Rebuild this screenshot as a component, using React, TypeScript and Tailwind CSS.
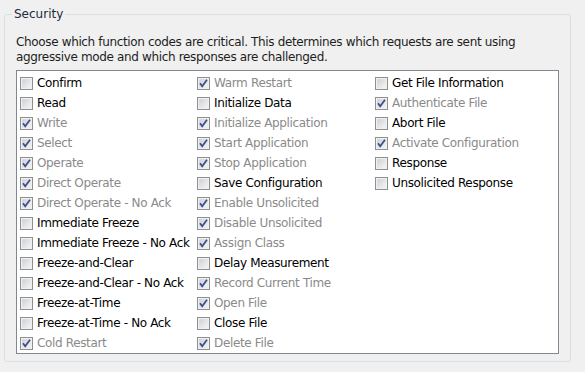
import React from 'react';

type Item = { label: string; checked: boolean };

const columns: Item[][] = [
  [
    { label: 'Confirm', checked: false },
    { label: 'Read', checked: false },
    { label: 'Write', checked: true },
    { label: 'Select', checked: true },
    { label: 'Operate', checked: true },
    { label: 'Direct Operate', checked: true },
    { label: 'Direct Operate - No Ack', checked: true },
    { label: 'Immediate Freeze', checked: false },
    { label: 'Immediate Freeze - No Ack', checked: false },
    { label: 'Freeze-and-Clear', checked: false },
    { label: 'Freeze-and-Clear - No Ack', checked: false },
    { label: 'Freeze-at-Time', checked: false },
    { label: 'Freeze-at-Time - No Ack', checked: false },
    { label: 'Cold Restart', checked: true },
  ],
  [
    { label: 'Warm Restart', checked: true },
    { label: 'Initialize Data', checked: false },
    { label: 'Initialize Application', checked: true },
    { label: 'Start Application', checked: true },
    { label: 'Stop Application', checked: true },
    { label: 'Save Configuration', checked: false },
    { label: 'Enable Unsolicited', checked: true },
    { label: 'Disable Unsolicited', checked: true },
    { label: 'Assign Class', checked: true },
    { label: 'Delay Measurement', checked: false },
    { label: 'Record Current Time', checked: true },
    { label: 'Open File', checked: true },
    { label: 'Close File', checked: false },
    { label: 'Delete File', checked: true },
  ],
  [
    { label: 'Get File Information', checked: false },
    { label: 'Authenticate File', checked: true },
    { label: 'Abort File', checked: false },
    { label: 'Activate Configuration', checked: true },
    { label: 'Response', checked: false },
    { label: 'Unsolicited Response', checked: false },
  ],
];

function Box({ checked }: { checked: boolean }) {
  return (
    <svg width="13" height="13" viewBox="0 0 13 13" className="shrink-0">
      <defs>
        <linearGradient id="cbfill" x1="0" y1="0" x2="1" y2="1">
          <stop offset="0" stopColor="#cbcfd5" />
          <stop offset="1" stopColor="#f6f6f6" />
        </linearGradient>
      </defs>
      <rect x="0.5" y="0.5" width="12" height="12" fill="#f4f4f4" stroke="#8f8f8f" />
      <rect x="2" y="2" width="9" height="9" fill="url(#cbfill)" stroke="#e6e6e6" strokeWidth="0.6" />
      {checked && (
        <path d="M3 6.2 L5.2 9.2 L10 2.8" fill="none" stroke="#3d4f8c" strokeWidth="1.8" strokeLinejoin="miter" />
      )}
    </svg>
  );
}

export default function App() {
  return (
    <div
      className="w-[585px] h-[372px] bg-[#f0f0f0] pt-[7px] pl-[4px] text-[11px] text-black overflow-hidden"
      style={{ fontFamily: '"DejaVu Sans", Verdana, sans-serif' }}
    >
      <fieldset className="w-[567px] h-[355px] border border-[#d5dfe5] rounded-[3px] pl-[11px] pr-[11px] m-0">
        <legend className="-ml-[4px] px-[2px] leading-[14px] text-[12px] text-[#1e2a3b]">Security</legend>
        {/* description */}
        <p className="mt-[14px] leading-[15px] text-[12px] tracking-[-0.35px] text-[#1e1e1e]">
          Choose which function codes are critical. This determines which requests are sent using
          <br />
          aggressive mode and which responses are challenged.
        </p>

        {/* list */}
        <div className="mt-[5px] w-[543px] h-[284px] bg-white border border-[#828790] flex pl-[3px] pt-[2px]">
          {columns.map((col, i) => (
            <div key={i} className={i === 0 ? 'w-[177px]' : i === 1 ? 'w-[178px]' : 'flex-1'}>
              {col.map((it) => (
                <div key={it.label} className="h-[20px] flex items-center gap-[4px]">
                  <Box checked={it.checked} />
                  <span className={`text-[12px] tracking-[-0.35px] whitespace-nowrap ${it.checked ? 'text-[#8a8a8a]' : 'text-black'}`}>
                    {it.label}
                  </span>
                </div>
              ))}
            </div>
          ))}
        </div>
      </fieldset>
    </div>
  );
}
